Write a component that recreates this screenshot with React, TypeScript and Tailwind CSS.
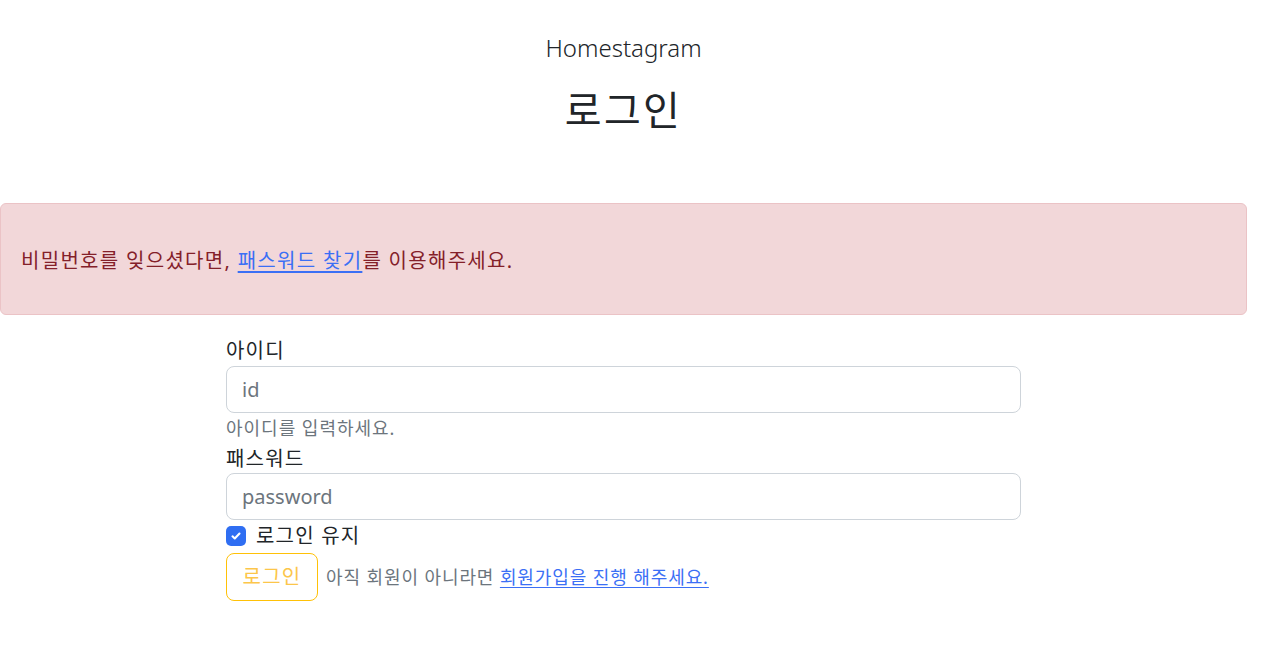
import React from 'react';

const font = "font-['Noto_Sans','Noto_Sans_CJK_KR',sans-serif]";

const App: React.FC = () => {
  return (
    <div className={`min-h-screen bg-white text-[#212529] ${font}`}>
      <div className="w-[1247px]">
        {/* Header */}
        <header className="flex flex-col items-center pt-[33px]">
          <h2 className="text-[24px] leading-[29px] font-light">Homestagram</h2>
          <h1 className="mt-[24px] text-[40px] leading-[48px] font-normal tracking-[0.06em]">로그인</h1>
        </header>

        {/* Alert */}
        <div className="mt-[69px] rounded-[6px] border border-[#ebc3c6] bg-[#f2d7d9] pt-[43px] pb-[39px] pl-[20px] text-[20px] leading-[28px] tracking-[0.065em] text-[#842029]">
          비밀번호를 잊으셨다면, <a href="#" className="text-[#3b6ff5] underline underline-offset-[3px]">패스워드 찾기</a>를 이용해주세요.
        </div>

        {/* Form */}
        <form className="mx-auto mt-[21px] flex w-[795px] flex-col">
          <label className="text-[20px] leading-[30px] tracking-[0.06em]">아이디</label>
          <input
            type="text"
            placeholder="id"
            className="h-[47px] rounded-[8px] border border-[#ced4da] px-[15px] text-[20px] outline-none placeholder:text-[#6c757d]"
          />
          <p className="text-[18px] leading-[31px] tracking-[0.055em] text-[#6c757d]">아이디를 입력하세요.</p>
          <label className="text-[20px] leading-[29px] tracking-[0.06em]">패스워드</label>
          <input
            type="password"
            placeholder="password"
            className="h-[47px] rounded-[8px] border border-[#ced4da] px-[15px] text-[20px] outline-none placeholder:text-[#6c757d]"
          />
          <div className="flex h-[32px] items-center gap-[10px]">
            <span className="flex h-[20px] w-[20px] items-center justify-center rounded-[5px] bg-[#2f6ef2]">
              <svg viewBox="0 0 20 20" className="h-[14px] w-[14px]" fill="none">
                <path d="M5 10.5l3.2 3L15 6.5" stroke="#fff" strokeWidth="3" strokeLinecap="round" strokeLinejoin="round" />
              </svg>
            </span>
            <span className="text-[20px] leading-[30px] tracking-[0.06em]">로그인 유지</span>
          </div>
          <div className="mt-[1px] flex items-center gap-[8px]">
            <button
              type="button"
              className="h-[48px] w-[92px] rounded-[8px] border border-[#ffc107] text-[20px] tracking-[0.06em] text-[#fcc64a]"
            >
              로그인
            </button>
            <span className="text-[18px] tracking-[0.05em] text-[#6c757d]">
              아직 회원이 아니라면 <a href="#" className="text-[#3b6ff5] underline underline-offset-[3px]">회원가입을 진행 해주세요.</a>
            </span>
          </div>
        </form>
      </div>
    </div>
  );
};

export default App;
